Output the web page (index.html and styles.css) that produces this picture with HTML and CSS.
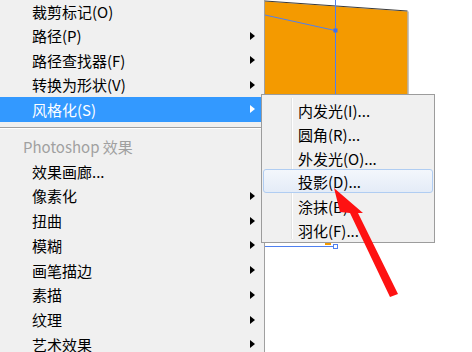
FILE: index.html
```html
<!DOCTYPE html>
<html lang="zh-CN">
<head>
<meta charset="UTF-8">
<title>效果菜单</title>
<link rel="stylesheet" href="styles.css">
</head>
<body>

<div class="screen">
  <!-- 主菜单 -->
  <div class="menu">
    <div class="item first">裁剪标记(O)</div>
    <div class="item">路径(P)<span class="arr"></span></div>
    <div class="item">路径查找器(F)<span class="arr"></span></div>
    <div class="item">转换为形状(V)<span class="arr"></span></div>
    <div class="item active">风格化(S)<span class="arr"></span></div>

    <div class="sep"></div>

    <div class="item head">Photoshop 效果</div>
    <div class="item lo">效果画廊...</div>
    <div class="item lo">像素化<span class="arr"></span></div>
    <div class="item lo">扭曲<span class="arr"></span></div>
    <div class="item lo">模糊<span class="arr"></span></div>
    <div class="item lo">画笔描边<span class="arr"></span></div>
    <div class="item lo">素描<span class="arr"></span></div>
    <div class="item lo">纹理<span class="arr"></span></div>
    <div class="item lo">艺术效果<span class="arr"></span></div>
  </div>

  <!-- 画布 -->
  <div class="canvas">
    <svg width="207" height="352" viewBox="0 0 207 352" aria-hidden="true">
      <polygon points="0,1.5 142.5,11.5 142.5,242 0,242" fill="#f49a00"/>
      <line x1="0" y1="1" x2="142.5" y2="11" stroke="#3a3a3a" stroke-width="1"/>
      <line x1="143" y1="11.5" x2="143" y2="242" stroke="#8c8c8c" stroke-width="1"/>
      <line x1="70.5" y1="0" x2="70.5" y2="242" stroke="#4f80f0" stroke-width="1"/>
      <line x1="0" y1="15" x2="70" y2="30.5" stroke="#4f80f0" stroke-width="1"/>
      <rect x="68.5" y="28.5" width="4" height="4" fill="#3d70f0"/>
      <rect x="60" y="243" width="6" height="2" fill="#f49a00"/>
      <line x1="0" y1="246.5" x2="68" y2="246.5" stroke="#4f80f0" stroke-width="1"/>
      <rect x="68.5" y="244.5" width="4" height="4" fill="#fff" stroke="#4f80f0" stroke-width="1"/>
    </svg>
  </div>

  <!-- 子菜单 -->
  <div class="submenu">
    <div class="sub">内发光(I)...</div>
    <div class="sub">圆角(R)...</div>
    <div class="sub">外发光(O)...</div>
    <div class="sub hover">投影(D)...</div>
    <div class="sub">涂抹(B)...</div>
    <div class="sub">羽化(F)...</div>
  </div>

  <!-- 红色箭头 -->
  <svg class="pointer" width="472" height="352" viewBox="0 0 472 352" aria-hidden="true">
    <polygon points="334,188 363,213 358,213 398,294 390,297 350,213 340,212" fill="#fe1212"/>
  </svg>
</div>

</body>
</html>
```

FILE: styles.css
```css
/* ─── Reset ─── */
*,*::before,*::after{box-sizing:border-box;margin:0;padding:0}
body{font-family:"Noto Sans CJK SC","Liberation Sans",sans-serif;font-size:15px;color:#000;background:#fff;overflow:hidden}

.screen{position:relative;width:472px;height:352px;display:flex;overflow:hidden}

/* ─── Główne menu ─── */
.menu{width:265px;flex:none;height:352px;background:#f0f0f0;border-right:1px solid #a0a0a0;overflow:hidden}
.item{height:24.5px;display:flex;align-items:center;padding:0 9px 0 32px;white-space:nowrap}
.item.first{margin-top:-1px}
.item.lo{height:24.75px}
.item.head{height:24.75px;padding-left:23px;color:#a0a0a0}
.item.active{background:#3399ff;color:#fff}
.arr{margin-left:auto;width:0;height:0;border-top:4px solid transparent;border-bottom:4px solid transparent;border-left:5px solid #000}
.active .arr{border-left-color:#fff}

.sep{height:1px;background:#a0a0a0;margin:5.5px 0 6px;box-shadow:0 1px 0 #fff}

/* ─── Płótno ─── */
.canvas{flex:1;background:#fff}
.canvas svg{display:block}

/* ─── Podmenu ─── */
.submenu{
  position:absolute;left:261px;top:94px;width:174px;height:149px;
  border:1px solid #9c9c9c;padding:3px 1px 0;
  background:linear-gradient(to right,transparent 29px,#e2e3e3 29px,#e2e3e3 30px,#fff 30px,#fff 31px,transparent 31px) 0 3px/100% 141px no-repeat,#f0f0f0;
}
.sub{height:24px;display:flex;align-items:center;padding-left:34px;white-space:nowrap;border:1px solid transparent;border-radius:3px}
.sub.hover{margin-top:-1px;margin-bottom:1px;border-color:#b0cdf2;background:linear-gradient(#f3f7fc,#e4ecf7)}

/* ─── Strzałka ─── */
.pointer{position:absolute;left:0;top:0;pointer-events:none}
```
